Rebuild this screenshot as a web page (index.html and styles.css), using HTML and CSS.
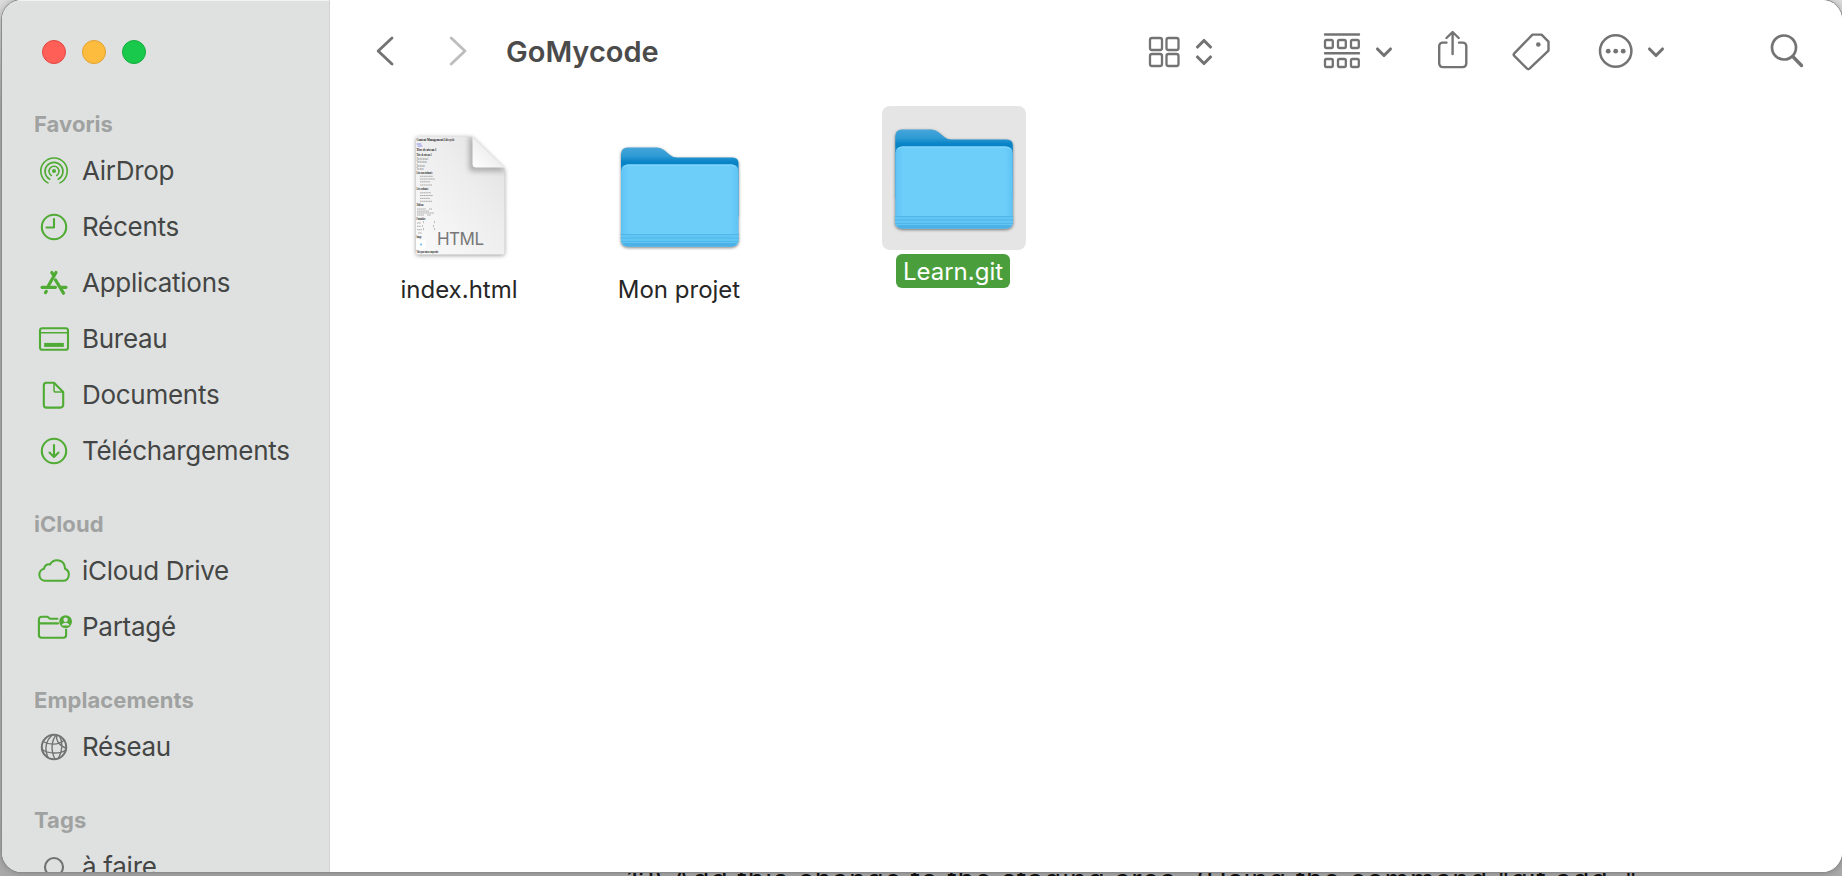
FILE: index.html
```html
<!DOCTYPE html>
<html lang="fr">
<head>
<meta charset="utf-8">
<title>GoMycode</title>
<link rel="stylesheet" href="styles.css">
</head>
<body>
<div class="desktop">
  <p class="behind-text"><span class="num">12)</span>Add this change to the staging area. (Using the command "git add ."</p>
  <div class="window">
    <aside class="sidebar">
      <div class="lights"><i class="light red"></i><i class="light yellow"></i><i class="light green"></i></div>
      <section class="group">
        <h2>Favoris</h2>
        <div class="row"><svg class="ico" viewBox="0 0 40 40"><circle cx="20" cy="20" r="2" fill="currentColor" stroke="none"/><path d="M17.3 24.2a5 5 0 1 1 5.4 0M15.8 28a9 9 0 1 1 8.4 0M14 31.6a13.2 13.2 0 1 1 12 0" stroke-width="1.6" transform="translate(0 .3)"/></svg><span>AirDrop</span></div>
        <div class="row"><svg class="ico" viewBox="0 0 40 40"><circle cx="20" cy="20" r="12.2"/><path d="M20 12v8.5h-7.5"/></svg><span>Récents</span></div>
        <div class="row"><svg class="ico" viewBox="0 0 40 40"><path d="M22 9.5 14.5 22.5M17.8 9.5l2 3.2M8 24.3h13.5M26.5 24.3H32M21.5 17l8 13.2M11.5 29.6l.8-1.2" stroke-width="3.2"/></svg><span>Applications</span></div>
        <div class="row"><svg class="ico" viewBox="0 0 40 40"><rect x="6" y="9.2" width="28" height="21.6" rx="2.4"/><path d="M6 13.8h28" stroke-width="1.5"/><path d="M11.2 25.9h17.6" stroke-width="4" stroke-linecap="square" transform="translate(1.8) scale(.91 1)"/></svg><span>Bureau</span></div>
        <div class="row"><svg class="ico" viewBox="0 0 40 40"><path d="M12.2 7.8H20L29.2 17v13a2.6 2.6 0 0 1-2.6 2.6H12.4A2.6 2.6 0 0 1 9.8 30V10.4a2.6 2.6 0 0 1 2.4-2.6z"/><path d="M20 8v7.2a1.8 1.8 0 0 0 1.8 1.8H29" stroke-width="1.5"/></svg><span>Documents</span></div>
        <div class="row"><svg class="ico" viewBox="0 0 40 40"><circle cx="20" cy="20" r="12.2"/><path d="M20 14v11.5M15.5 21.5 20 26l4.500-4.500"/></svg><span>Téléchargements</span></div>
      </section>
      <section class="group">
        <h2>iCloud</h2>
        <div class="row"><svg class="ico" viewBox="0 0 40 40"><path d="M11 29.800a6.100 6.100 0 0 1-1-12c.3-3.300 3.200-5.200 6-4.300 3.800-6.600 14.800-5.400 15 4.200 5.900 2.300 4.700 12.100-2 12.100z"/></svg><span>iCloud Drive</span></div>
        <div class="row"><svg class="ico" viewBox="0 0 40 40"><path d="M23.500 11.700H16l-2.500-2H7.600a2.700 2.700 0 0 0-2.700 2.700v15.700a2.700 2.700 0 0 0 2.700 2.700h21.800a2.700 2.700 0 0 0 2.700-2.700V22.500M5 16.400h19"/><circle cx="31.600" cy="14.600" r="6.400" fill="currentColor" stroke="none"/><circle cx="31.600" cy="12.700" r="2.200" class="cut"/><path d="M27.600 18.400c1-3.600 7-3.600 8 0z" class="cut"/></svg><span>Partagé</span></div>
      </section>
      <section class="group">
        <h2>Emplacements</h2>
        <div class="row"><svg class="ico grey" viewBox="0 0 40 40"><circle cx="20" cy="20" r="12.200"/><path d="M9 14.500c6 3.500 15 4 21.500-1.500M8 22.500c7 4.500 17.500 4.800 24 .5M22.500 8C18 12 16 23 21 32M18.500 8C12 13 10 22 14 30.500M22.500 8C22 14 24 18 31.500 21M25.800 9.500c3 5.500 3 14-1.300 21.500" stroke-width="1.400"/></svg><span>Réseau</span></div>
      </section>
      <section class="group">
        <h2>Tags</h2>
        <div class="row"><svg class="ico grey" viewBox="0 0 40 40"><circle cx="20" cy="20" r="9"/></svg><span>à faire</span></div>
      </section>
    </aside>
    <main class="content">
      <header class="toolbar">
        <svg class="back" viewBox="375 31 20 40" width="20" height="40"><path d="M392 38 378.200 51 392 64" stroke-width="2.900"/></svg>
        <svg class="forward" viewBox="448 31 20 40" width="20" height="40"><path d="M451.200 38 465 51l-13.800 13" stroke-width="2.900"/></svg>
        <h1>GoMycode</h1>
        <svg class="view" viewBox="1148 31 66 40" width="66" height="40"><g stroke-width="2.300"><rect x="1150" y="38" width="12" height="12" rx="2"/><rect x="1166.500" y="38" width="12" height="12" rx="2"/><rect x="1150" y="54" width="12" height="12" rx="2"/><rect x="1166.500" y="54" width="12" height="12" rx="2"/></g><path d="m1197.500 47 6.500-6.500 6.500 6.500M1197.500 57l6.500 6.500 6.500-6.500" stroke-width="3.100"/></svg>
        <svg class="arrange" viewBox="1322 31 72 40" width="72" height="40"><path d="M1325 34.500h34M1325 53.300h34" stroke-width="2.400"/><g stroke-width="2.300"><rect x="1325" y="40" width="7.800" height="8" rx="1.500"/><rect x="1338" y="40" width="7.800" height="8" rx="1.500"/><rect x="1351" y="40" width="7.800" height="8" rx="1.500"/><rect x="1325" y="59" width="7.800" height="8" rx="1.500"/><rect x="1338" y="59" width="7.800" height="8" rx="1.500"/><rect x="1351" y="59" width="7.800" height="8" rx="1.500"/></g><path d="m1377.500 49 6.500 6.500 6.500-6.500" stroke-width="3.100"/></svg>
        <svg class="share" viewBox="1436 31 34 40" width="34" height="40"><path d="M1446.500 42.600h-3.800a3.500 3.500 0 0 0-3.500 3.500v17.500a3.500 3.500 0 0 0 3.500 3.500h20.100a3.500 3.500 0 0 0 3.500-3.500V46.100a3.500 3.500 0 0 0-3.500-3.500h-3.800M1452.600 54V32.500M1446.500 38l6.100-6 6.100 6" stroke-width="2.400"/></svg>
        <svg class="tag" viewBox="1510 31 42 40" width="42" height="40"><path d="M1532.500 34.600h9l7 7v9L1529.500 68.700q-1.200 1-2.400 0l-12.800-12.800q-1.200-1.200 0-2.500z" stroke-width="2.400"/><circle cx="1538.300" cy="44.500" r="2.300" class="dot"/></svg>
        <svg class="more" viewBox="1597 31 69 40" width="69" height="40"><circle cx="1615.700" cy="51" r="15.700" stroke-width="2.500"/><g class="dot"><circle cx="1608.200" cy="51.200" r="2.400"/><circle cx="1615.700" cy="51.200" r="2.400"/><circle cx="1623.200" cy="51.200" r="2.400"/></g><path d="m1649.500 49 6.500 6.500 6.500-6.500" stroke-width="3.100"/></svg>
        <svg class="search" viewBox="1769 31 36 40" width="36" height="40"><circle cx="1784" cy="47.500" r="12" stroke-width="2.700"/><path d="m1793 56.800 8.500 8.700" stroke-width="3.400"/></svg>
      </header>
      <div class="files">
        <figure class="file">
          <div class="thumb">
            <svg viewBox="387 123.500 144 144" width="144" height="144">
              <defs>
                <linearGradient id="paper" x1="0" y1="1" x2="1" y2="0"><stop offset="0" stop-color="#fafafa"/><stop offset=".6" stop-color="#ededed"/><stop offset="1" stop-color="#e0e0e0"/></linearGradient>
                <linearGradient id="curl" x1="0" y1="1" x2=".6" y2=".4"><stop offset="0" stop-color="#fff"/><stop offset="1" stop-color="#ececec"/></linearGradient>
                <filter id="soft" x="-30%" y="-30%" width="160%" height="160%"><feGaussianBlur stdDeviation="2.500"/></filter>
                <clipPath id="sheet"><path d="M418 136h54l32.500 32v84q0 2-2 2h-84.500q-2 0-2-2V138q0-2 2-2z"/></clipPath>
              </defs>
              <path class="sheet" d="M418 136h54l32.500 32v84q0 2-2 2h-84.500q-2 0-2-2V138q0-2 2-2z" fill="url(#paper)"/>
              <g clip-path="url(#sheet)"><path d="M469 134v33q0 4 4 4h34z" fill="#777" opacity=".5" filter="url(#soft)"/></g>
              <path d="M472.500 136.500v27q0 3.500 3.500 3.500h28z" fill="url(#curl)"/>
              <g class="mini">
                <text x="416.500" y="140.500" class="b" textLength="38" lengthAdjust="spacingAndGlyphs">Content Management Lifecycle</text>
                <text x="416.500" y="150.800" class="b" textLength="20" lengthAdjust="spacingAndGlyphs">Titre de niveau 1</text>
                <text x="416.500" y="155.300" class="b" textLength="15" lengthAdjust="spacingAndGlyphs">Titre de niveau 2</text>
                <text x="416.500" y="159" textLength="12" lengthAdjust="spacingAndGlyphs">Titre de niveau 3</text>
                <text x="416.500" y="162.500" textLength="10" lengthAdjust="spacingAndGlyphs">Titre de niveau</text>
                <text x="416.500" y="166" textLength="8" lengthAdjust="spacingAndGlyphs">Titre niveau</text>
                <text x="416.500" y="169.300" textLength="7" lengthAdjust="spacingAndGlyphs">Titre niveau</text>
                <text x="416.500" y="173.300" class="b" textLength="16" lengthAdjust="spacingAndGlyphs">Liste non ordonnée</text>
                <text x="416.500" y="189.300" class="b" textLength="12" lengthAdjust="spacingAndGlyphs">Liste ordonnée</text>
                <text x="416.500" y="205.800" class="b" textLength="7" lengthAdjust="spacingAndGlyphs">Tableau</text>
                <text x="416.500" y="219.300" class="b" textLength="9" lengthAdjust="spacingAndGlyphs">Formulaire</text>
                <text x="416.500" y="237.500" class="b" textLength="5" lengthAdjust="spacingAndGlyphs">Image</text>
                <text x="416.500" y="252.500" class="b" textLength="22" lengthAdjust="spacingAndGlyphs">Video pour mieux comprendre</text>
              </g>
              <path class="lines" d="M420 175.800h13M420 178.500h15M420 181.300h10M420 184.500h12M420 192.300h11M420 195h13M420 197.900h10M420 200.800h12M417 208.500h9m3 0h3M417 210.600h12M417 212.500h17M417 214.500h7m3 0h4M417 222.500h4M417 225.800h4M417 229.200h5m1.500-8.500v2m11-2v2m-12 2v2m11-2v2m-10 1v2m11-2v2M418 232.500h4"/>
              <path d="M417 143.500h4M418 145.500h4" stroke="#5555e8" stroke-width=".9" opacity=".7"/>
              <rect x="416.500" y="239.500" width="9" height="9" fill="#fff"/><circle cx="421" cy="244" r="1" fill="#63b4e8"/>
              <text x="437" y="244" class="kind" textLength="47">HTML</text>
            </svg>
          </div>
          <figcaption>index.html</figcaption>
        </figure>
        <figure class="file second">
          <div class="thumb">
            <svg viewBox="0 -.5 144 144" width="144" height="144">
              <defs>
                <linearGradient id="back" x1="0" y1="0" x2="0" y2="1"><stop offset="0" stop-color="#46a6da"/><stop offset=".12" stop-color="#2f9bd4"/><stop offset=".21" stop-color="#0783c6"/><stop offset="1" stop-color="#2d95ce"/></linearGradient>
                <linearGradient id="front" x1="0" y1="0" x2="1" y2="0"><stop offset="0" stop-color="#5fc3f3"/><stop offset=".07" stop-color="#6dcefa"/><stop offset=".93" stop-color="#6dcefa"/><stop offset="1" stop-color="#5fc3f3"/></linearGradient>
                <g id="folder">
                  <path d="M14 92V30q0-7 7-7h29q4 0 7 2.500l6 5q3 2.500 7 2.500h55.500q6 0 6 6v53z" fill="url(#back)"/>
                  <path d="M21 40h103.500q7 0 7 7V115q0 7-7 7h-103.500q-7 0-7-7V47q0-7 7-7z" fill="url(#front)"/>
                  <path d="M14 110.500h117.500V115q0 7-7 7h-103.500q-7 0-7-7z" fill="#62c6f4"/>
                  <path d="M14 110h117.500M14 113.500h117.500M14.500 117h116.500" stroke="#50b5e7" stroke-width="1" fill="none"/>
                  <path d="M15.500 118.500q1.500 3.500 5.500 3.500h103.500q4 0 5.500-3.500z" fill="#4bb1e6"/>
                  <path d="M17 42.300q1.500-1.800 4-1.800h103.500q2.500 0 4 1.800" stroke="#8cdafd" fill="none"/>
                </g>
              </defs>
              <use href="#folder" class="shadowed"/>
            </svg>
          </div>
          <figcaption>Mon projet</figcaption>
        </figure>
        <figure class="file selected">
          <div class="thumb"><svg viewBox="0 -.5 144 144" width="144" height="144"><use href="#folder" class="shadowed" transform="translate(-.700 0)"/></svg></div>
          <figcaption>Learn.git</figcaption>
        </figure>
      </div>
    </main>
  </div>
</div>
</body>
</html>
```
FILE: styles.css
```css
* { box-sizing: border-box; }
body { margin: 0; font-family: Inter, "Liberation Sans", sans-serif; }
h1, h2, p, figure { margin: 0; }

.desktop {
  position: relative;
  width: 1842px;
  height: 876px;
  overflow: hidden;
  padding-left: 2px;
  background: linear-gradient(#dedede, #b0b0b0 12%, #b4b4b4 90%, #a9a9a9);
}
.behind-text {
  position: absolute;
  left: 627px;
  top: 863px;
  display: flex;
  font-size: 28px;
  line-height: 34px;
  letter-spacing: 1px;
  white-space: nowrap;
  color: #111;
}
.num { width: 45px; letter-spacing: -1px; }
.window {
  position: relative;
  display: flex;
  width: 1840px;
  height: 872px;
  overflow: hidden;
  border-radius: 20px;
  background: #fff;
  box-shadow: 0 0 0 1px #8c8c8c, 0 0 8px rgba(0, 0, 0, .3);
}

.sidebar {
  flex: none;
  width: 328px;
  height: 872px;
  background: #dfe1e0;
  border-right: 1px solid #d2d4d3;
  box-shadow: inset 0 1px #f2f3f2;
}
.lights { display: flex; gap: 16px; height: 105px; padding: 40px 0 0 40px; }
.light { width: 24px; height: 24px; border-radius: 50%; border: 1px solid; }
.red { background: #ff5f57; border-color: #e2463f; }
.yellow { background: #febc3e; border-color: #e0a02f; }
.green { background: #19c94c; border-color: #12ac3a; }

.group { margin-bottom: 26px; }
.group h2 {
  height: 38px;
  padding-left: 32px;
  line-height: 38px;
  font-size: 22px;
  font-weight: 700;
  letter-spacing: .05px;
  color: #a0a2a1;
}
.row {
  display: flex;
  align-items: center;
  gap: 8px;
  height: 56px;
  padding-left: 32px;
  font-size: 26px;
  letter-spacing: -.28px;
  color: #444645;
}
.row span { padding-bottom: 1px; }
svg { display: block; flex: none; fill: none; stroke: currentColor; stroke-linecap: round; stroke-linejoin: round; }
.ico { width: 40px; height: 40px; color: #4fab33; stroke-width: 2.1; }
.ico.grey { color: #717372; }
.cut { fill: #dfe1e0; stroke: none; }

.content { flex: 1; background: #fff; }
.toolbar { display: flex; align-items: center; height: 102px; padding-left: 45px; color: #737373; }
.forward { margin-left: 53px; color: #bdbdbd; }
.toolbar h1 { width: 642px; margin-left: 38px; padding-top: 2px; font-size: 29px; font-weight: 600; line-height: 40px; color: #4b4b4b; }
.arrange { margin-left: 108px; }
.share { margin-left: 42px; }
.tag { margin-left: 40px; }
.more { margin-left: 45px; }
.search { margin-left: 103px; }
.dot { fill: currentColor; stroke: none; }

.files { display: flex; align-items: flex-start; padding: 4px 0 0 57px; }
.file { display: flex; flex-direction: column; align-items: center; width: 144px; margin-top: 18px; }
.second { margin-left: 76px; }
.selected { margin: 0 0 0 131px; }
.thumb { height: 144px; border-radius: 8px; }
.selected .thumb { background: #e5e5e5; }
.file figcaption {
  height: 34px;
  margin-top: 4px;
  padding: 1px 7px 0;
  border-radius: 6px;
  font-size: 24px;
  line-height: 34px;
  white-space: nowrap;
  color: #262626;
}
.selected figcaption { margin-right: 2px; background: #4a9f3c; color: #fff; }
.shadowed { stroke: none; filter: drop-shadow(0 1.500px 1.500px rgba(0, 0, 0, .5)); }
.sheet { filter: drop-shadow(0 1.500px 2px rgba(0, 0, 0, .4)); }
.file svg { stroke: none; }
.mini { font: 3.200px "Liberation Serif", serif; fill: #555; }
.mini .b { font-weight: 700; fill: #111; }
.file .lines { stroke: #999; stroke-width: .8; stroke-linecap: butt; stroke-dasharray: 1.500 .300; }
.file .kind { font-size: 17px; fill: #777; }
```
